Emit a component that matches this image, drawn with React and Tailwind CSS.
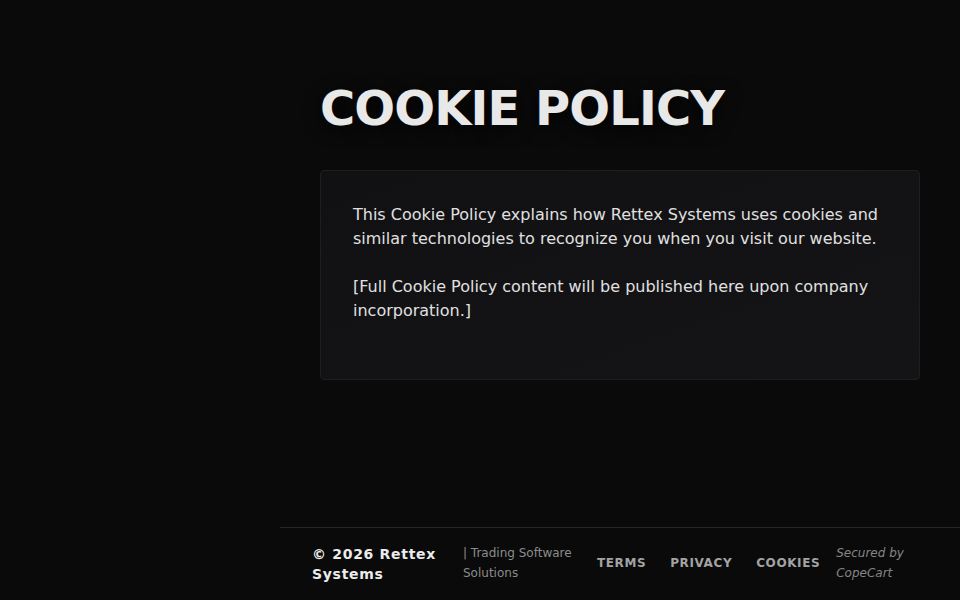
import React from "react";

const links = ["Terms", "Privacy", "Cookies"];

export default function App() {
  return (
    <div
      className="min-h-screen flex bg-[#0a0a0a] text-[#e6e6e6]"
      style={{ fontFamily: '"DejaVu Sans", sans-serif' }}
    >
      {/* sidebar slot, empty on this page */}
      <aside className="w-[280px] shrink-0" />

      <div className="flex-1 flex flex-col min-h-screen">
        <main className="flex-1 px-10 pt-[78px]">
          <h1 className="text-5xl leading-[60px] font-bold tracking-[-0.9px] text-[#e8e8e8] [text-shadow:0_4px_18px_rgba(0,0,0,0.9)]">
            COOKIE POLICY
          </h1>

          <div className="mt-8 w-[600px] rounded border border-[#1e1e21] bg-gradient-to-br from-[#111113] to-[#141417] px-8 pt-8 pb-8">
            <p className="text-base leading-6 text-[#e0e0e0] mb-6">
              This Cookie Policy explains how Rettex Systems uses cookies and
              similar technologies to recognize you when you visit our website.
            </p>
            <p className="text-base leading-6 text-[#e0e0e0] mb-6">
              [Full Cookie Policy content will be published here upon company
              incorporation.]
            </p>
          </div>
        </main>

        <footer className="border-t border-[#262626] flex items-center px-8 py-4">
          <div className="w-[151px] shrink-0 text-sm leading-5 font-bold tracking-wider text-[#ececec]">
            © 2026 Rettex Systems
          </div>
          <div className="w-[134px] shrink-0 -mt-0.5 text-xs leading-5 text-[#8c8c8c]">
            | Trading Software Solutions
          </div>
          <nav className="flex items-center gap-6 -mt-0.5">
            {links.map((l) => (
              <a
                key={l}
                href="#"
                className="text-xs font-bold uppercase tracking-wider text-[#a3a3a3]"
              >
                {l}
              </a>
            ))}
          </nav>
          <div className="ml-4 -mt-0.5 text-xs leading-5 italic text-[#858585]">
            Secured by
            <br />
            CopeCart
          </div>
        </footer>
      </div>
    </div>
  );
}
